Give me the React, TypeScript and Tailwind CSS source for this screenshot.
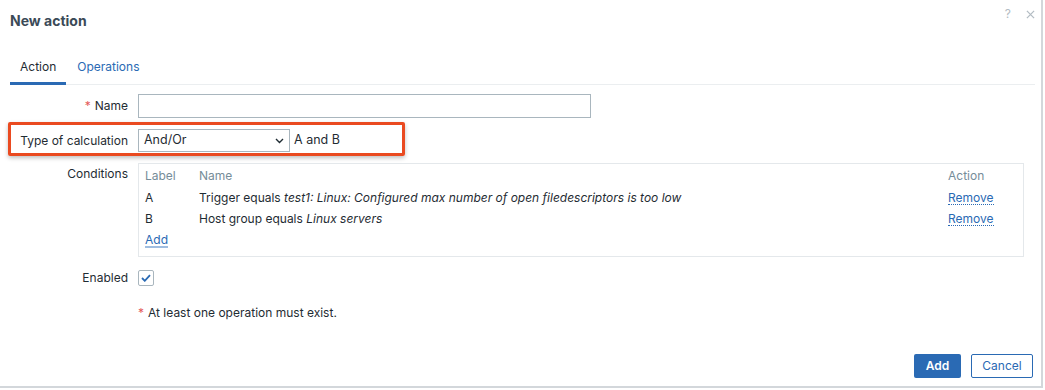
import React from "react";

const conditions = [
  { label: "A", prefix: "Trigger equals ", value: "test1: Linux: Configured max number of open filedescriptors is too low" },
  { label: "B", prefix: "Host group equals ", value: "Linux servers" },
];

const App: React.FC = () => {
  return (
    <div className="w-[1045px] h-[390px] bg-white font-['Inter','Liberation_Sans',sans-serif] text-[12px] text-[#1f2c33]">
      <div className="relative w-[1043px] h-[388px] border-r-2 border-b-2 border-[#d3d7db] bg-white">
        {/* Header */}
        <div className="flex items-center justify-between h-[40px] pl-[10px] pr-[6px]">
          <h2 className="text-[14px] font-bold text-[#3b4a57]">New action</h2>
          <div className="flex items-center gap-[15px] text-[#b3bcc3] -mt-[12px]">
            <span className="text-[12px]">?</span>
            <svg width="9" height="9" viewBox="0 0 10 10" className="stroke-[#b3bcc3]" strokeWidth="1.4">
              <path d="M1 1L9 9M9 1L1 9" />
            </svg>
          </div>
        </div>

        {/* Tabs */}
        <div className="mx-[10px] mt-[18px] flex border-b border-[#ebeef0] w-[1025px]">
          <div className="px-[10px] pb-[6px] border-b-[3px] border-[#2a6ab4] -mb-px text-[12px] text-[#1f2c33]">Action</div>
          <div className="px-[11px] pb-[6px] text-[12px] text-[#2a6ab4]">Operations</div>
        </div>

        {/* Form */}
        <div className="mt-[9px] flex flex-col">
          <div className="flex items-center">
            <div className="w-[128px] text-right"><span className="text-[#e45959] mr-[4px]">*</span>Name</div>
            <input className="ml-[10px] w-[453px] h-[24px] border border-[#a9b6be] bg-white outline-none" />
          </div>

          <div className="flex items-center mt-[11px]">
            <div className="w-[128px] text-right">Type of calculation</div>
            <div className="ml-[10px] w-[152px] h-[23px] border border-[#a9b6be] flex items-center justify-between pl-[5px] pr-[5px] text-[12.5px]">
              <span>And/Or</span>
              <svg width="9" height="6" viewBox="0 0 9 6" fill="none" stroke="#1f2c33" strokeWidth="1.4">
                <path d="M1 1l3.5 3.5L8 1" />
              </svg>
            </div>
            <span className="ml-[4px] text-[12.5px]">A and B</span>
          </div>

          <div className="flex items-start mt-[11px]">
            <div className="w-[128px] text-right mt-[2px]">Conditions</div>
            <div className="ml-[10px] w-[886px] h-[94px] border border-[#e4e8eb] px-[6px] pt-[1px]">
              <div className="flex text-[#768d99] h-[22px] items-center">
                <div className="w-[54px]">Label</div>
                <div className="flex-1">Name</div>
                <div className="w-[69px]">Action</div>
              </div>
              {conditions.map((c) => (
                <div key={c.label} className="flex h-[21px] items-center">
                  <div className="w-[54px]">{c.label}</div>
                  <div className="flex-1">
                    {c.prefix}
                    <i>{c.value}</i>
                  </div>
                  <div className="w-[69px]">
                    <span className="text-[#2a6ab4] border-b border-dotted border-[#2a6ab4] leading-[13px] inline-block">Remove</span>
                  </div>
                </div>
              ))}
              <div className="h-[22px] flex items-center">
                <span className="text-[#2a6ab4] border-b-2 border-[#9fbde0] leading-[13px] inline-block">Add</span>
              </div>
            </div>
          </div>

          <div className="flex items-center mt-[12px]">
            <div className="w-[128px] text-right">Enabled</div>
            <div className="ml-[10px] w-[16px] h-[16px] border border-[#a9b6be] rounded-[2px] flex items-center justify-center">
              <svg width="10" height="8" viewBox="0 0 10 8" fill="none" stroke="#2a6ab4" strokeWidth="1.8">
                <path d="M1 4l2.8 2.8L9 1.2" />
              </svg>
            </div>
          </div>

          <div className="ml-[138px] mt-[17px]">
            <span className="text-[#e45959] mr-[4px]">*</span>At least one operation must exist.
          </div>
        </div>

        {/* Footer */}
        <div className="absolute right-[8px] bottom-[8px] flex gap-[10px]">
          <button className="w-[47px] h-[24px] rounded-[2px] bg-[#2a6ab4] text-white font-semibold text-[12px]">Add</button>
          <button className="w-[62px] h-[24px] rounded-[2px] border border-[#2a6ab4] text-[#2a6ab4] text-[12px]">Cancel</button>
        </div>

        {/* Annotation highlight */}
        <div className="absolute left-[8px] top-[122px] w-[397px] h-[34px] border-[3px] border-[#ea4a20] rounded-[2px] shadow-[0_2px_4px_rgba(0,0,0,0.25)]" />
      </div>
    </div>
  );
};

export default App;
